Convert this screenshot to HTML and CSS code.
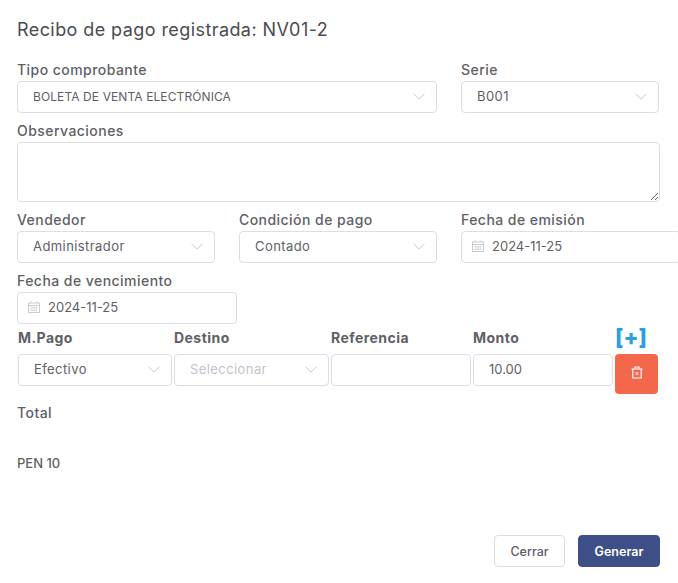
FILE: index.html
```html
<!DOCTYPE html>
<html lang="es">
<head>
<meta charset="utf-8">
<title>Recibo de pago</title>
<link rel="stylesheet" href="styles.css">
</head>
<body>
<svg class="defs" width="0" height="0" aria-hidden="true">
  <symbol id="chev" viewBox="0 0 12 7"><path d="M.6.8 6 6.2 11.4.8" fill="none" stroke="#c6c8d0" stroke-width="1"/></symbol>
  <symbol id="cal" viewBox="0 0 12 12"><path d="M.5 2h11v9.5H.5zM.5 4.5h11M3 .5V2M9 .5V2" fill="none" stroke="#c8cad2" stroke-width="1"/><path d="M2.5 6.5h7M2.5 8h7M2.5 9.5h7" stroke="#c8cad2" stroke-width="1" stroke-dasharray="1.2 .6"/></symbol>
</svg>
<main class="page">
  <h1 class="title">Recibo de pago registrada: NV01-2</h1>
  <div class="form-grid">
    <div class="field span-2">
      <label class="label">Tipo comprobante</label>
      <div class="control select upper"><span>BOLETA DE VENTA ELECTRÓNICA</span><svg class="chev"><use href="#chev"/></svg></div>
    </div>
    <div class="field">
      <label class="label">Serie</label>
      <div class="control select"><span>B001</span><svg class="chev"><use href="#chev"/></svg></div>
    </div>
    <div class="field span-3">
      <label class="label">Observaciones</label>
      <textarea class="notes"></textarea>
    </div>
    <div class="field">
      <label class="label">Vendedor</label>
      <div class="control select"><span>Administrador</span><svg class="chev"><use href="#chev"/></svg></div>
    </div>
    <div class="field">
      <label class="label">Condición de pago</label>
      <div class="control select"><span>Contado</span><svg class="chev"><use href="#chev"/></svg></div>
    </div>
    <div class="field">
      <label class="label">Fecha de emisión</label>
      <div class="control date"><svg class="cal"><use href="#cal"/></svg><span>2024-11-25</span></div>
    </div>
    <div class="field">
      <label class="label">Fecha de vencimiento</label>
      <div class="control date"><svg class="cal"><use href="#cal"/></svg><span>2024-11-25</span></div>
    </div>
  </div>
  <div class="pay-grid">
    <div class="th">M.Pago</div>
    <div class="th">Destino</div>
    <div class="th">Referencia</div>
    <div class="th">Monto</div>
    <div class="th add">[+]</div>
    <div class="control select"><span>Efectivo</span><svg class="chev"><use href="#chev"/></svg></div>
    <div class="control select muted"><span>Seleccionar</span><svg class="chev"><use href="#chev"/></svg></div>
    <input class="control" type="text" value="">
    <input class="control amount-input" type="text" value="10.00">
    <button class="del" type="button" aria-label="Eliminar">
      <svg width="12" height="13" viewBox="0 0 12 13"><path d="M.5 3h11M4 3V1h4v2M1.8 3v9h8.4V3" fill="none" stroke="#fff" stroke-width="1.2"/><path d="m4.6 6 2.8 3M7.4 6 4.6 9" stroke="#fff" stroke-width="1"/></svg>
    </button>
  </div>
  <p class="total">Total</p>
  <p class="amount">PEN 10</p>
  <div class="actions">
    <button class="btn" type="button">Cerrar</button>
    <button class="btn primary" type="button">Generar</button>
  </div>
</main>
</body>
</html>
```

FILE: styles.css
```css
html, body {
  margin: 0;
  height: 100%;
  overflow: hidden;
  background: #fff;
}
body {
  font-family: Inter, "Noto Sans", sans-serif;
  color: #5f6066;
  font-size: 13px;
}
.defs { position: absolute; }
.page {
  padding: 19px 18px 0 17px;
  width: 678px;
  box-sizing: border-box;
}
.title {
  margin: 0 0 19px;
  font-size: 18px;
  letter-spacing: .42px;
  line-height: 22px;
  font-weight: 400;
  color: #4a4b50;
}
.form-grid {
  display: grid;
  grid-template-columns: 198px 198px 198px;
  column-gap: 24px;
  row-gap: 8px;
}
.span-2 { grid-column: span 2; }
.span-3 { grid-column: span 3; }
.label {
  display: block;
  height: 21px;
  line-height: 20px;
  font-size: 14px;
  letter-spacing: .45px;
  font-weight: 500;
  color: #5f6066;
}
.control {
  display: flex;
  align-items: center;
  box-sizing: border-box;
  height: 32px;
  width: 100%;
  padding: 0 15px 2px;
  border: 1px solid #dcdde8;
  border-radius: 4px;
  background: #fff;
  font: inherit;
  font-size: 13px;
  letter-spacing: .42px;
  color: #5f6066;
}
.select { justify-content: space-between; padding-right: 11px; }
.upper { font-size: 12px; letter-spacing: .1px; padding-bottom: 1px; }
.muted { color: #c0c2cc; }
.amount-input { letter-spacing: 0; }
.chev { width: 12px; height: 7px; }
.date { width: 220px; padding-left: 10px; letter-spacing: 0; }
.cal { width: 12px; height: 12px; margin-right: 8px; }
.notes {
  display: block;
  box-sizing: border-box;
  width: 643px;
  height: 60px;
  border: 1px solid #dcdde8;
  border-radius: 4px;
  background: #fff;
  padding: 5px 15px;
  margin: 0;
}
.pay-grid {
  display: grid;
  grid-template-columns: 154px 155px 140px 140px 43px;
  grid-template-rows: 30px auto;
  column-gap: 2px;
  margin-left: 1px;
  align-items: start;
}
.th {
  font-size: 14px;
  letter-spacing: .45px;
  font-weight: 700;
  line-height: 28px;
  color: #5f6066;
}
.add {
  font-size: 22px;
  font-weight: 800;
  color: #2b9fe0;
  letter-spacing: 0;
  line-height: 27px;
}
.del {
  display: flex;
  align-items: center;
  justify-content: center;
  height: 40px;
  padding: 0 0 4px;
  border: 0;
  border-radius: 4px;
  background: #f4674a;
}
.total, .amount {
  margin: 0;
  font-size: 14px;
  letter-spacing: .45px;
  font-weight: 500;
  line-height: 20px;
}
.total { margin-top: 9px; }
.amount { margin-top: 30px; font-size: 13px; letter-spacing: 0; }
.actions {
  display: flex;
  justify-content: flex-end;
  gap: 13px;
  margin-top: 62px;
}
.btn {
  box-sizing: border-box;
  width: 71px;
  height: 32px;
  padding: 0;
  border: 1px solid #dcdde8;
  border-radius: 4px;
  background: #fff;
  font: inherit;
  font-size: 12.5px;
  font-weight: 500;
  color: #5f6066;
}
.primary {
  width: 82px;
  border-color: #3e4e87;
  background: #3e4e87;
  color: #fff;
  font-weight: 600;
}
```
